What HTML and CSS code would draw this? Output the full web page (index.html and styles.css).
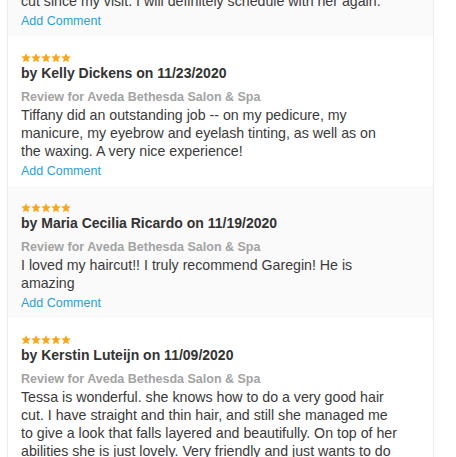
FILE: index.html
```html
<!DOCTYPE html>
<html>
<head>
<meta charset="utf-8">
<link rel="stylesheet" href="styles.css">
</head>
<body>
<svg width="0" height="0" class="defs">
  <defs>
    <symbol id="star" viewBox="0 0 20 20">
      <polygon points="10,0.5 12.9,6.5 19.5,7.2 14.5,11.7 15.9,18.5 10,15.1 4.1,18.5 5.5,11.7 0.5,7.2 7.1,6.5" fill="#f6a71e"/>
    </symbol>
  </defs>
</svg>
<div class="list">
  <div class="review alt first">
    <p class="body">cut since my visit. I will definitely schedule with her again.</p>
    <a class="comment" href="#">Add Comment</a>
  </div>
  <div class="review">
    <div class="stars"><svg><use href="#star"/></svg><svg><use href="#star"/></svg><svg><use href="#star"/></svg><svg><use href="#star"/></svg><svg><use href="#star"/></svg></div>
    <div class="name">by Kelly Dickens on 11/23/2020</div>
    <div class="for">Review for Aveda Bethesda Salon &amp; Spa</div>
    <p class="body">Tiffany did an outstanding job -- on my pedicure, my manicure, my eyebrow and eyelash tinting, as well as on the waxing. A very nice experience!</p>
    <a class="comment" href="#">Add Comment</a>
  </div>
  <div class="review alt">
    <div class="stars"><svg><use href="#star"/></svg><svg><use href="#star"/></svg><svg><use href="#star"/></svg><svg><use href="#star"/></svg><svg><use href="#star"/></svg></div>
    <div class="name">by Maria Cecilia Ricardo on 11/19/2020</div>
    <div class="for">Review for Aveda Bethesda Salon &amp; Spa</div>
    <p class="body">I loved my haircut!! I truly recommend Garegin! He is amazing</p>
    <a class="comment" href="#">Add Comment</a>
  </div>
  <div class="review">
    <div class="stars"><svg><use href="#star"/></svg><svg><use href="#star"/></svg><svg><use href="#star"/></svg><svg><use href="#star"/></svg><svg><use href="#star"/></svg></div>
    <div class="name">by Kerstin Luteijn on 11/09/2020</div>
    <div class="for">Review for Aveda Bethesda Salon &amp; Spa</div>
    <p class="body">Tessa is wonderful. she knows how to do a very good hair cut. I have straight and thin hair, and still she managed me to give a look that falls layered and beautifully. On top of her abilities she is just lovely. Very friendly and just wants to do her best.</p>
    <a class="comment" href="#">Add Comment</a>
  </div>
</div>
</body>
</html>
```

FILE: styles.css
```css
html, body {
  margin: 0;
  padding: 0;
  background: #ffffff;
  overflow: hidden;
}
body {
  font-family: "Liberation Sans", Arial, Helvetica, sans-serif;
  color: #333333;
  height: 457px;
}
.defs {
  position: absolute;
}
.list {
  margin: -8px 0 0 7px;
  width: 425px;
  border-left: 1px solid #ececec;
  border-right: 1px solid #ececec;
}
.review {
  padding: 16px 13px 6px 13px;
  display: flex;
  flex-direction: column;
  background: #ffffff;
}
.review.alt {
  background: #fafafa;
}
.review.first {
  padding-top: 0;
}
.stars {
  display: flex;
  height: 12px;
  align-items: center;
}
.stars svg {
  width: 10px;
  height: 10px;
}
.name {
  font-weight: bold;
  font-size: 14px;
  line-height: 18px;
  color: #333333;
  margin-bottom: 6px;
}
.for {
  font-weight: bold;
  font-size: 12.5px;
  line-height: 18px;
  color: #a3a3a3;
}
.body {
  margin: 0;
  font-size: 14.2px;
  line-height: 18px;
  color: #3a3a3a;
  width: 378px;
}
.comment {
  margin-top: 2px;
  font-size: 12.5px;
  line-height: 18px;
  color: #2a9fd6;
  text-decoration: none;
}
```
